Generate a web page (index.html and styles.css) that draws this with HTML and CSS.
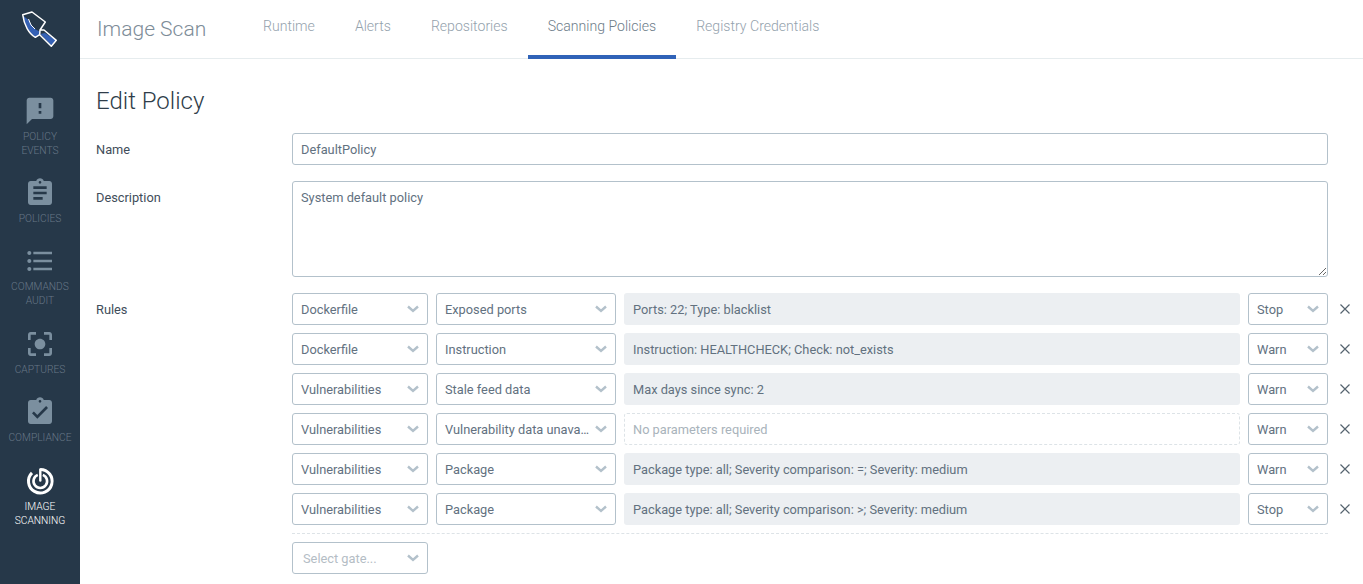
FILE: index.html
```html
<!DOCTYPE html>
<html lang="en">
<head>
    <meta charset="UTF-8">
    <title>Image Scan</title>
    <link rel="stylesheet" href="styles.css">
</head>
<body>
<div class="app">
    <nav class="sidebar">
        <div class="logo">
            <svg width="40" height="40" viewBox="0 0 40 40">
                <path d="M3.500 9 C5 18 9 26 15.300 30 L19.700 27.500 L20.500 25 L14 21.500 L8.500 13 Z M20.500 27 L31.300 38.300 L35.800 33.300 L25 26 Z" fill="#3561b5"/>
                <path d="M2.700 7.700 L12 5 L25.300 15 L20 23 L19.700 27.700 L15.300 30.300 C9 27 4 18 2.700 7.700 Z M20 23 L24 23 L36.300 33.300 L31.300 39.300 L19.700 27.700" fill="none" stroke="#fff" stroke-width="1.500" stroke-linejoin="round"/>
                <path d="M8.500 12 L11 18 L15 22" fill="none" stroke="#fff" stroke-width="1"/>
            </svg>
        </div>
        <a class="nav-item">
            <svg class="nav-icon" viewBox="0 0 24 24"><path d="M20 2H4c-1.100 0-1.990.9-1.990 2L2 22l4-4h14c1.100 0 2-.9 2-2V4c0-1.100-.9-2-2-2zm-7 12h-2v-2h2v2zm0-4h-2V6h2v4z"/></svg>
            <span>Policy<br>Events</span>
        </a>
        <a class="nav-item">
            <svg class="nav-icon" viewBox="0 0 24 24"><path d="M19 3h-4.180C14.400 1.840 13.300 1 12 1c-1.300 0-2.400.84-2.820 2H5c-1.100 0-2 .9-2 2v14c0 1.100.9 2 2 2h14c1.100 0 2-.9 2-2V5c0-1.100-.9-2-2-2zm-7 0c.55 0 1 .45 1 1s-.45 1-1 1-1-.45-1-1 .45-1 1-1zm2 14H7v-2h7v2zm3-4H7v-2h10v2zm0-4H7V7h10v2z"/></svg>
            <span>Policies</span>
        </a>
        <a class="nav-item">
            <svg class="nav-icon" viewBox="0 0 24 24"><path d="M4 10.500c-.83 0-1.500.67-1.500 1.500s.67 1.500 1.500 1.500 1.500-.67 1.500-1.500-.67-1.500-1.500-1.500zm0-6c-.83 0-1.500.67-1.500 1.500S3.170 7.500 4 7.500 5.500 6.830 5.500 6 4.830 4.500 4 4.500zm0 12c-.83 0-1.500.68-1.500 1.500s.68 1.500 1.500 1.500 1.500-.68 1.500-1.500-.67-1.500-1.500-1.500zM7 19h14v-2H7v2zm0-6h14v-2H7v2zm0-8v2h14V5H7z"/></svg>
            <span>Commands<br>Audit</span>
        </a>
        <a class="nav-item">
            <svg class="nav-icon" viewBox="0 0 24 24"><path d="M12 8c-2.210 0-4 1.790-4 4s1.790 4 4 4 4-1.790 4-4-1.790-4-4-4zm-7 7H3v4c0 1.100.9 2 2 2h4v-2H5v-4zM5 5h4V3H5c-1.100 0-2 .9-2 2v4h2V5zm14-2h-4v2h4v4h2V5c0-1.100-.9-2-2-2zm0 16h-4v2h4c1.100 0 2-.9 2-2v-4h-2v4z"/></svg>
            <span>Captures</span>
        </a>
        <a class="nav-item">
            <svg class="nav-icon" viewBox="0 0 24 24"><path d="M19 3h-4.180C14.400 1.840 13.300 1 12 1c-1.300 0-2.400.84-2.820 2H5c-1.100 0-2 .9-2 2v14c0 1.100.9 2 2 2h14c1.100 0 2-.9 2-2V5c0-1.100-.9-2-2-2zm-7 0c.55 0 1 .45 1 1s-.45 1-1 1-1-.45-1-1 .45-1 1-1zm-2 14l-4-4 1.410-1.410L10 14.170l6.590-6.590L18 9l-8 8z"/></svg>
            <span>Compliance</span>
        </a>
        <a class="nav-item active">
            <svg class="nav-icon" viewBox="0 0 32 32">
                <path d="M16.300 4.400 A11.800 11.800 0 1 1 7.960 7.860" fill="none" stroke="#fff" stroke-width="3"/>
                <path d="M18.850 9.900 A6.800 6.800 0 1 1 13.750 9.900" fill="none" stroke="#fff" stroke-width="2.600"/>
                <path d="M16.300 4.400 V15.500" fill="none" stroke="#fff" stroke-width="2.400" stroke-linecap="round"/>
            </svg>
            <span>Image<br>Scanning</span>
        </a>
    </nav>
    <div class="main">
        <header class="topbar">
            <div class="brand">Image Scan</div>
            <ul class="tabs">
                <li>Runtime</li>
                <li>Alerts</li>
                <li>Repositories</li>
                <li class="selected">Scanning Policies</li>
                <li>Registry Credentials</li>
            </ul>
        </header>
        <form class="content">
            <h1 class="title">Edit Policy</h1>
            <div class="field name-field">
                <label>Name</label>
                <input class="text-input" type="text" value="DefaultPolicy">
            </div>
            <div class="field desc-field">
                <label>Description</label>
                <textarea class="text-input area">System default policy</textarea>
            </div>
            <div class="field">
                <label class="rules-label">Rules</label>
                <div class="rules">
                    <div class="rule">
                        <div class="select gate"><span>Dockerfile</span><svg class="chev" viewBox="0 0 12 8"><path d="M1 1.500 L6 6 L11 1.500"/></svg></div>
                        <div class="select trigger"><span>Exposed ports</span><svg class="chev" viewBox="0 0 12 8"><path d="M1 1.500 L6 6 L11 1.500"/></svg></div>
                        <div class="params">Ports: 22; Type: blacklist</div>
                        <div class="select action"><span>Stop</span><svg class="chev" viewBox="0 0 12 8"><path d="M1 1.500 L6 6 L11 1.500"/></svg></div>
                        <svg class="remove" viewBox="0 0 10 10"><path d="M0.500 0.500 L9.500 9.500 M9.500 0.500 L0.500 9.500"/></svg>
                    </div>
                    <div class="rule">
                        <div class="select gate"><span>Dockerfile</span><svg class="chev" viewBox="0 0 12 8"><path d="M1 1.500 L6 6 L11 1.500"/></svg></div>
                        <div class="select trigger"><span>Instruction</span><svg class="chev" viewBox="0 0 12 8"><path d="M1 1.500 L6 6 L11 1.500"/></svg></div>
                        <div class="params">Instruction: HEALTHCHECK; Check: not_exists</div>
                        <div class="select action"><span>Warn</span><svg class="chev" viewBox="0 0 12 8"><path d="M1 1.500 L6 6 L11 1.500"/></svg></div>
                        <svg class="remove" viewBox="0 0 10 10"><path d="M0.500 0.500 L9.500 9.500 M9.500 0.500 L0.500 9.500"/></svg>
                    </div>
                    <div class="rule">
                        <div class="select gate"><span>Vulnerabilities</span><svg class="chev" viewBox="0 0 12 8"><path d="M1 1.500 L6 6 L11 1.500"/></svg></div>
                        <div class="select trigger"><span>Stale feed data</span><svg class="chev" viewBox="0 0 12 8"><path d="M1 1.500 L6 6 L11 1.500"/></svg></div>
                        <div class="params">Max days since sync: 2</div>
                        <div class="select action"><span>Warn</span><svg class="chev" viewBox="0 0 12 8"><path d="M1 1.500 L6 6 L11 1.500"/></svg></div>
                        <svg class="remove" viewBox="0 0 10 10"><path d="M0.500 0.500 L9.500 9.500 M9.500 0.500 L0.500 9.500"/></svg>
                    </div>
                    <div class="rule">
                        <div class="select gate"><span>Vulnerabilities</span><svg class="chev" viewBox="0 0 12 8"><path d="M1 1.500 L6 6 L11 1.500"/></svg></div>
                        <div class="select trigger"><span>Vulnerability data unava…</span><svg class="chev" viewBox="0 0 12 8"><path d="M1 1.500 L6 6 L11 1.500"/></svg></div>
                        <div class="params empty">No parameters required</div>
                        <div class="select action"><span>Warn</span><svg class="chev" viewBox="0 0 12 8"><path d="M1 1.500 L6 6 L11 1.500"/></svg></div>
                        <svg class="remove" viewBox="0 0 10 10"><path d="M0.500 0.500 L9.500 9.500 M9.500 0.500 L0.500 9.500"/></svg>
                    </div>
                    <div class="rule">
                        <div class="select gate"><span>Vulnerabilities</span><svg class="chev" viewBox="0 0 12 8"><path d="M1 1.500 L6 6 L11 1.500"/></svg></div>
                        <div class="select trigger"><span>Package</span><svg class="chev" viewBox="0 0 12 8"><path d="M1 1.500 L6 6 L11 1.500"/></svg></div>
                        <div class="params">Package type: all; Severity comparison: =; Severity: medium</div>
                        <div class="select action"><span>Warn</span><svg class="chev" viewBox="0 0 12 8"><path d="M1 1.500 L6 6 L11 1.500"/></svg></div>
                        <svg class="remove" viewBox="0 0 10 10"><path d="M0.500 0.500 L9.500 9.500 M9.500 0.500 L0.500 9.500"/></svg>
                    </div>
                    <div class="rule">
                        <div class="select gate"><span>Vulnerabilities</span><svg class="chev" viewBox="0 0 12 8"><path d="M1 1.500 L6 6 L11 1.500"/></svg></div>
                        <div class="select trigger"><span>Package</span><svg class="chev" viewBox="0 0 12 8"><path d="M1 1.500 L6 6 L11 1.500"/></svg></div>
                        <div class="params">Package type: all; Severity comparison: &gt;; Severity: medium</div>
                        <div class="select action"><span>Stop</span><svg class="chev" viewBox="0 0 12 8"><path d="M1 1.500 L6 6 L11 1.500"/></svg></div>
                        <svg class="remove" viewBox="0 0 10 10"><path d="M0.500 0.500 L9.500 9.500 M9.500 0.500 L0.500 9.500"/></svg>
                    </div>
                    <div class="new-rule">
                        <div class="select gate placeholder"><span>Select gate...</span><svg class="chev" viewBox="0 0 12 8"><path d="M1 1.500 L6 6 L11 1.500"/></svg></div>
                    </div>
                </div>
            </div>
        </form>
    </div>
</div>
</body>
</html>
```

FILE: styles.css
```css
*{
    margin: 0;
    padding: 0;
    box-sizing: border-box;
}
ul,ol{
    list-style: none;
}
html,body{
    height: 100%;
    overflow: hidden;
}
body{
    font-family: Roboto, "Liberation Sans", sans-serif;
    font-size: 12.8px;
    color: #3f4d5a;
    background: #fff;
}
.app{
    display: flex;
    height: 100%;
}

/* sidebar */
.sidebar{
    width: 80px;
    flex: none;
    background: #263849;
    display: flex;
    flex-direction: column;
    align-items: center;
    gap: 19.4px;
}
.logo{
    height: 48px;
    margin-top: 7px;
    margin-bottom: 20.2px;
}
.nav-item{
    display: flex;
    flex-direction: column;
    align-items: center;
    width: 100%;
    text-align: center;
    font-size: 10.24px;
    font-weight: 300;
    line-height: 14px;
    text-transform: uppercase;
    color: #667787;
}
.nav-icon{
    width: 32px;
    height: 32px;
    margin-bottom: 3px;
    fill: #7b8f9f;
}
.nav-item.active{
    color: #fff;
}

/* top bar */
.main{
    flex: 1;
    min-width: 0;
}
.topbar{
    height: 59px;
    display: flex;
    border-bottom: 1px solid #e6ecee;
}
.brand{
    width: 163px;
    padding-left: 17px;
    font-size: 21px;
    font-weight: 300;
    line-height: 58px;
    color: #7d8c98;
}
.tabs{
    display: flex;
}
.tabs li{
    padding: 0 20px;
    font-size: 14.08px;
    font-weight: 300;
    line-height: 53px;
    height: 59px;
    color: #94a2ad;
}
.tabs li.selected{
    color: #6d7c89;
    border-bottom: 4px solid #3063b8;
}

/* form */
.content{
    padding: 26px 35px 0 16px;
}
.title{
    font-size: 24px;
    font-weight: 300;
    line-height: 32px;
    color: #2f3d4a;
    margin-bottom: 16px;
}
.field{
    display: flex;
    margin-bottom: 16px;
}
.field label{
    width: 196px;
    height: 32px;
    flex: none;
    line-height: 33px;
    font-weight: 400;
}
.text-input{
    flex: 1;
    height: 32px;
    padding: 0 8px;
    border: 1px solid #b3c1cb;
    border-radius: 3px;
    font-family: inherit;
    font-size: 12.8px;
    color: #62717f;
    background: #fff;
    outline: none;
}
.area{
    height: 96px;
    padding: 8px;
    line-height: 16px;
}

/* rules */
.rules{
    flex: 1;
    min-width: 0;
}
.rule{
    display: flex;
    gap: 8px;
    height: 32px;
    margin-bottom: 8px;
    position: relative;
}
.select{
    display: flex;
    align-items: center;
    flex: none;
    height: 32px;
    padding: 0 8px;
    border: 1px solid #b3c1cb;
    border-radius: 3px;
    color: #62717f;
    background: #fff;
}
.select span{
    flex: 1;
    min-width: 0;
    white-space: nowrap;
    overflow: hidden;
    text-overflow: ellipsis;
}
.chev{
    flex: none;
    width: 12px;
    height: 8px;
    margin-left: 4px;
    fill: none;
    stroke: #b3c1cb;
    stroke-width: 2.400;
}
.gate{
    width: 136px;
}
.trigger{
    width: 180px;
}
.action{
    width: 80px;
}
.params{
    flex: 1;
    min-width: 0;
    height: 32px;
    padding: 0 9px;
    line-height: 33px;
    border-radius: 3px;
    background: #eceff2;
    color: #62717f;
}
.params.empty{
    background: #fff;
    border: 1px dashed #dde3e7;
    line-height: 31px;
    padding: 0 8px;
    color: #a9b3bb;
}
.remove{
    position: absolute;
    right: -22px;
    top: 11px;
    width: 10px;
    height: 10px;
    fill: none;
    stroke: #56646f;
    stroke-width: 1.200;
}
.new-rule{
    border-top: 1px dashed #dde3e7;
    padding-top: 8px;
}
.placeholder span{
    color: #b4bdc5;
    padding-left: 2px;
}
```
